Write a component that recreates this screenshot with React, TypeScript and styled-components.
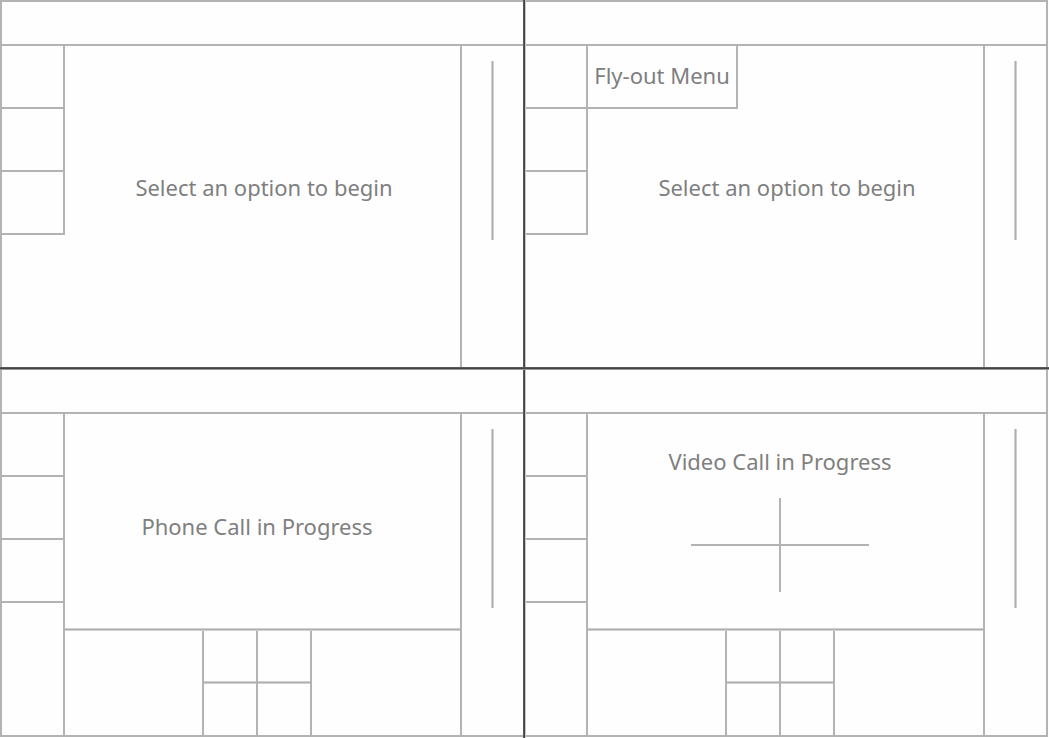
import React from "react";
import styled, { createGlobalStyle } from "styled-components";

const line = "#b3b3b3";
const softEdge = "#cfcfcf";

const GlobalStyle = createGlobalStyle`
  *, *::before, *::after { box-sizing: border-box; }
  body {
    margin: 0;
    background: #fefefe;
    color: #7f7f7f;
    font-family: "Noto Sans", "Open Sans", sans-serif;
  }
`;

const Board = styled.main`
  display: grid;
  grid-template-columns: minmax(0, 1fr) 3px minmax(0, 1fr);
  grid-template-rows: 1fr 3px 1fr;
  min-height: 100vh;
  padding-bottom: 1px;
`;

const RowDivider = styled.div`
  grid-column: 1 / -1;
  grid-row: 2;
  background: #444;
  border-top: 1px solid #585858;
  border-bottom: 1px solid #999;
`;

const ColumnDivider = styled.div`
  grid-column: 2;
  grid-row: 1 / -1;
  margin-bottom: -1px;
  background: #444;
  border-left: 1px solid #585858;
  border-right: 1px solid #c8c8c8;
`;

type Column = "left" | "right";
type Level = "top" | "bottom";

const Frame = styled.section<{ $side: Column; $level: Level }>`
  grid-column: ${(p) => (p.$side === "left" ? 1 : 3)};
  grid-row: ${(p) => (p.$level === "top" ? 1 : 3)};
  display: flex;
  flex-direction: column;
  min-width: 0;
  margin-right: ${(p) => (p.$side === "right" ? "1px" : "0")};
  border: 0 solid ${line};
  border-left-width: ${(p) => (p.$side === "left" ? "2px" : "0")};
  border-right-width: ${(p) => (p.$side === "right" ? "2px" : "0")};
  border-top-width: ${(p) => (p.$level === "top" ? "2px" : "0")};
  border-bottom-width: ${(p) => (p.$level === "bottom" ? "2px" : "0")};
`;

const Header = styled.header`
  flex: 0 0 44px;
  border-bottom: 2px solid ${line};
`;

const Body = styled.div`
  flex: 1;
  display: flex;
  min-height: 0;
`;

const Nav = styled.nav<{ $side: Column; $full: boolean }>`
  position: relative;
  flex: 0 0 ${(p) => (p.$side === "left" ? "63px" : "62px")};
  align-self: ${(p) => (p.$full ? "stretch" : "flex-start")};
  display: flex;
  flex-direction: column;
  border-right: 2px solid ${line};
`;

const NavButton = styled.button`
  height: 63px;
  padding: 0;
  border: 0;
  border-bottom: 2px solid ${line};
  background: transparent;
`;

const FlyOut = styled.button`
  position: absolute;
  top: 0;
  left: 100%;
  margin-left: 2px;
  width: 150px;
  height: 63px;
  padding: 0 0 4px;
  border: 0 solid ${line};
  border-width: 0 2px 2px 0;
  background: #fefefe;
  color: inherit;
  font: inherit;
  font-size: 22px;
  line-height: 30px;
  white-space: nowrap;
`;

const Content = styled.div`
  flex: 1;
  min-width: 0;
  display: flex;
  flex-direction: column;
`;

const Stage = styled.div<{ $top: number; $call?: boolean }>`
  flex: 1;
  display: flex;
  flex-direction: column;
  align-items: center;
  gap: 22px;
  padding-top: ${(p) => p.$top}px;
  padding-left: ${(p) => (p.$call ? "0" : "3px")};
  padding-right: ${(p) => (p.$call ? "11px" : "0")};
`;

const Message = styled.p`
  margin: 0;
  font-size: 22px;
  line-height: 30px;
  white-space: nowrap;
`;

const SoftRule = styled.div`
  height: 3px;
  background: #b0b0b0;
  border: solid ${softEdge};
  border-width: 1px 0;
`;

const Controls = styled.div`
  display: flex;
  justify-content: center;
  padding-right: 11px;
`;

const Keypad = styled.div`
  display: grid;
  grid-template-columns: 52px 52px;
  grid-template-rows: 50px 3px 51px;
  column-gap: 2px;
  border: solid ${line};
  border-width: 0 2px;
  background: linear-gradient(${line}, ${line}) center / 2px 100% no-repeat;
`;

const Key = styled.button`
  padding: 0;
  border: 0;
  background: transparent;
`;

const Sidebar = styled.aside`
  flex: 0 0 63px;
  display: flex;
  justify-content: center;
  align-items: flex-start;
  padding-top: 15px;
  border-left: 2px solid ${line};
`;

const ScrollTrack = styled.div`
  width: 3px;
  height: 179px;
  background: #b0b0b0;
  border: solid ${softEdge};
  border-width: 0 1px;
`;

function CallControls() {
  return (
    <>
      <SoftRule />
      <Controls>
        <Keypad>
          <Key aria-label="Control 1" />
          <Key aria-label="Control 2" />
          <SoftRule />
          <SoftRule />
          <Key aria-label="Control 3" />
          <Key aria-label="Control 4" />
        </Keypad>
      </Controls>
    </>
  );
}

interface ScreenProps {
  side: Column;
  level: Level;
  flyOut?: string;
  children: React.ReactNode;
}

function Screen({ side, level, flyOut, children }: ScreenProps) {
  return (
    <Frame $side={side} $level={level}>
      <Header />
      <Body>
        <Nav $side={side} $full={level === "bottom"}>
          {[1, 2, 3].map((n) => (
            <NavButton key={n} aria-label={`Option ${n}`} />
          ))}
          {flyOut && <FlyOut>{flyOut}</FlyOut>}
        </Nav>
        <Content>{children}</Content>
        <Sidebar>
          <ScrollTrack />
        </Sidebar>
      </Body>
    </Frame>
  );
}

export default function App() {
  return (
    <>
      <GlobalStyle />
      <Board>
        <Screen side="left" level="top">
          <Stage $top={126}>
            <Message>Select an option to begin</Message>
          </Stage>
        </Screen>
        <Screen side="right" level="top" flyOut="Fly-out Menu">
          <Stage $top={126}>
            <Message>Select an option to begin</Message>
          </Stage>
        </Screen>
        <Screen side="left" level="bottom">
          <Stage $top={97} $call>
            <Message>Phone Call in Progress</Message>
          </Stage>
          <CallControls />
        </Screen>
        <Screen side="right" level="bottom">
          <Stage $top={32} $call>
            <Message>Video Call in Progress</Message>
            <svg width="178" height="94" viewBox="0 0 178 94" aria-hidden="true">
              <path d="M0 47H178M89 0V94" stroke={line} strokeWidth="2" />
            </svg>
          </Stage>
          <CallControls />
        </Screen>
        <ColumnDivider />
        <RowDivider />
      </Board>
    </>
  );
}
